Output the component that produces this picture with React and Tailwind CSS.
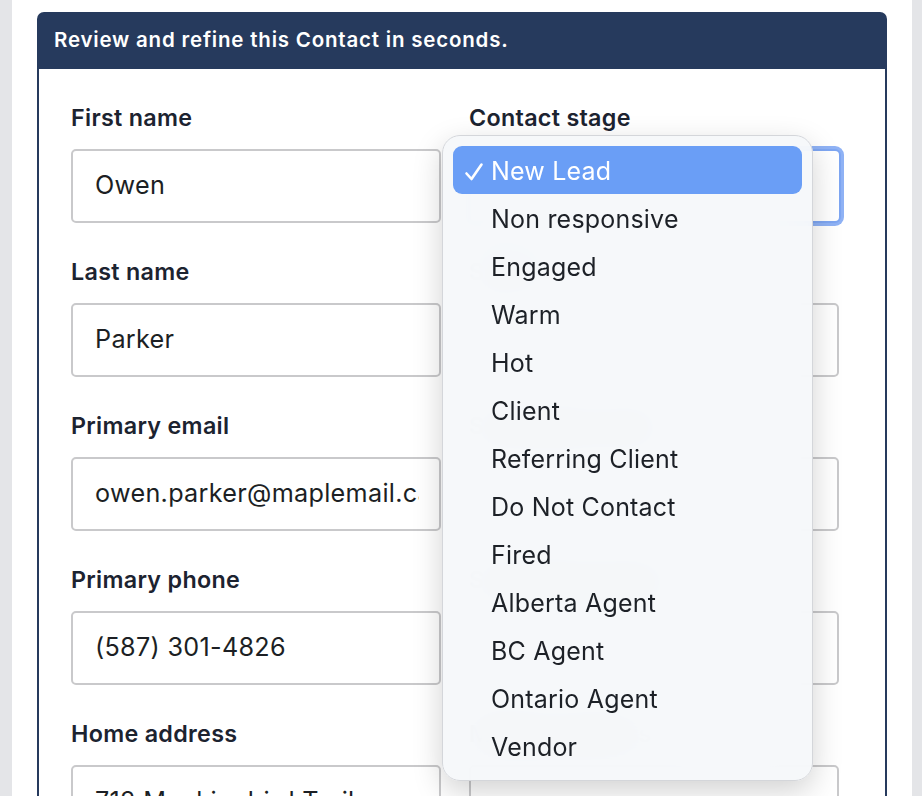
import React from 'react';

const stages = [
  'New Lead',
  'Non responsive',
  'Engaged',
  'Warm',
  'Hot',
  'Client',
  'Referring Client',
  'Do Not Contact',
  'Fired',
  'Alberta Agent',
  'BC Agent',
  'Ontario Agent',
  'Vendor',
];

const leftFields = [
  { label: 'First name', value: 'Owen' },
  { label: 'Last name', value: 'Parker' },
  { label: 'Primary email', value: 'owen.parker@maplemail.ca' },
  { label: 'Primary phone', value: '(587) 301-4826' },
  { label: 'Home address', value: '712 Mockingbird Trail' },
];

const rightFields = [
  { label: 'Source', value: '' },
  { label: 'Secondary email', value: '' },
  { label: 'Secondary phone', value: '' },
  { label: 'Mailing address', value: '' },
];

const Field = ({ label, value }) => (
  <div className="flex flex-col">
    <label className="h-[28px] flex items-center text-[23.3px] tracking-[0.3px] font-semibold text-[#1c2330] leading-none whitespace-nowrap">{label}</label>
    <div className="mt-[17px] h-[74px] border-2 border-[#c9c9cb] rounded-[5px] bg-white pl-[22px] pr-[20px] flex items-center">
      <div className="flex-1 overflow-hidden">
        <span className="text-[25.2px] tracking-[0.3px] text-[#1c1f24] whitespace-nowrap">{value}</span>
      </div>
    </div>
  </div>
);

const App = () => {
  return (
    <div className="h-[796px] overflow-hidden bg-[#e4e5e8] pl-[12px] pr-[10px]" style={{ fontFamily: 'Inter, "Liberation Sans", sans-serif' }}>
      <div className="h-full bg-white px-[25px] pt-[12px]">
        <div className="rounded-t-[7px] overflow-hidden">
          {/* Header */}
          <div className="bg-[#263a5d] h-[57px] flex items-center pl-[17px]">
            <h1 className="text-white text-[20.5px] tracking-[0.8px] font-semibold whitespace-nowrap">Review and refine this Contact in seconds.</h1>
          </div>

          {/* Body */}
          <div className="border-x-2 border-[#263a5d] h-[800px] pl-[32px] pr-[47px] pt-[35px]">
            <div className="grid grid-cols-2 gap-x-[28px] gap-y-[35px] w-[768px]">
              <Field {...leftFields[0]} />
              {/* Contact stage select with open menu */}
              <div className="flex flex-col relative">
                <label className="h-[28px] flex items-center text-[23.3px] tracking-[0.3px] font-semibold text-[#1c2330] leading-none">Contact stage</label>
                <div className="mt-[17px] h-[74px] border-2 border-[#7ea6f2] rounded-[6px] ring-[3px] ring-[#8fb2f5] bg-white w-[372px]"></div>

                <div className="absolute left-[-27px] top-[31px] w-[371px] rounded-[18px] bg-[#f6f8fa]/95 backdrop-blur-xl border border-[#d4d6da] shadow-[0_10px_30px_rgba(0,0,0,0.18)] p-[10px] z-10">
                  {stages.map((s, i) => (
                    <div
                      key={s}
                      className={
                        'h-[48px] pt-[3px] rounded-[9px] flex items-center text-[25px] tracking-[0.2px] ' +
                        (i === 0 ? 'bg-[#6a9ef6] text-white' : 'text-[#1d2127]')
                      }
                    >
                      <span className="w-[38px] flex justify-center">
                        {i === 0 && (
                          <svg width="20" height="20" viewBox="0 0 20 20" fill="none" className="ml-[4px]">
                            <path d="M2.5 11.5 L7.5 17 L17.5 2.5" stroke="white" strokeWidth="2.6" strokeLinecap="round" strokeLinejoin="round" />
                          </svg>
                        )}
                      </span>
                      <span>{s}</span>
                    </div>
                  ))}
                </div>
              </div>

              <Field {...leftFields[1]} />
              <Field {...rightFields[0]} />
              <Field {...leftFields[2]} />
              <Field {...rightFields[1]} />
              <Field {...leftFields[3]} />
              <Field {...rightFields[2]} />
              <Field {...leftFields[4]} />
              <Field {...rightFields[3]} />
            </div>
          </div>
        </div>
      </div>
    </div>
  );
};

export default App;
